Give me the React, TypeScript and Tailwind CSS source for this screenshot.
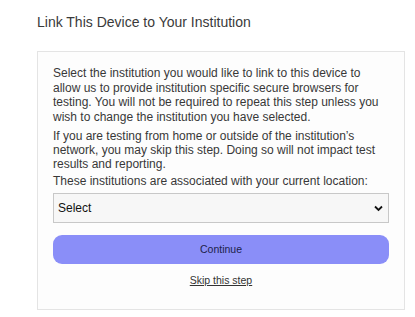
export default function App() {
    return (
        <div className="w-[415px] h-[317px] bg-white font-['Liberation_Sans',Arial,sans-serif] text-[#333]">
            <div className="pl-[37px] pt-[12px]">
                <h1 className="text-[14px] leading-[20px] text-[#3a3a3a]">Link This Device to Your Institution</h1>
            </div>
            <div className="ml-[37px] mt-[19px] w-[368px] h-[259px] border border-[#e4e4e4] bg-[#fdfdfd] px-[15px] pt-[14px]">
                <p className="text-[12px] leading-[14.5px] text-[#383838]">
                    Select the institution you would like to link to this device to allow us to provide institution specific secure browsers for testing. You will not be required to repeat this step unless you wish to change the institution you have selected.
                </p>
                <p className="mt-[5px] text-[12px] leading-[14px] text-[#383838]">
                    If you are testing from home or outside of the institution’s network, you may skip this step. Doing so will not impact test results and reporting.
                </p>
                <p className="mt-[3px] text-[12px] leading-[14px] text-[#383838]">
                    These institutions are associated with your current location:
                </p>
                <div className="relative mt-[5px] h-[30px] border border-[#c8c8c8] bg-[#f7f7f7] flex items-center pl-[4px]">
                    <span className="text-[12px] text-[#111]">Select</span>
                    <svg className="absolute right-[5px] top-[11px]" width="9" height="7" viewBox="0 0 9 7">
                        <path d="M1 1.5 L4.5 5 L8 1.5" fill="none" stroke="#111" strokeWidth="1.8" />
                    </svg>
                </div>
                <button className="mt-[12px] w-full h-[29px] rounded-[9px] bg-[#8a8ef8] text-[10.5px] text-[#1c1f4a] flex items-center justify-center">
                    Continue
                </button>
                <div className="mt-[8px] leading-[14px] text-center">
                    <a className="text-[10.5px] text-[#333] underline">Skip this step</a>
                </div>
            </div>
        </div>
    );
}
